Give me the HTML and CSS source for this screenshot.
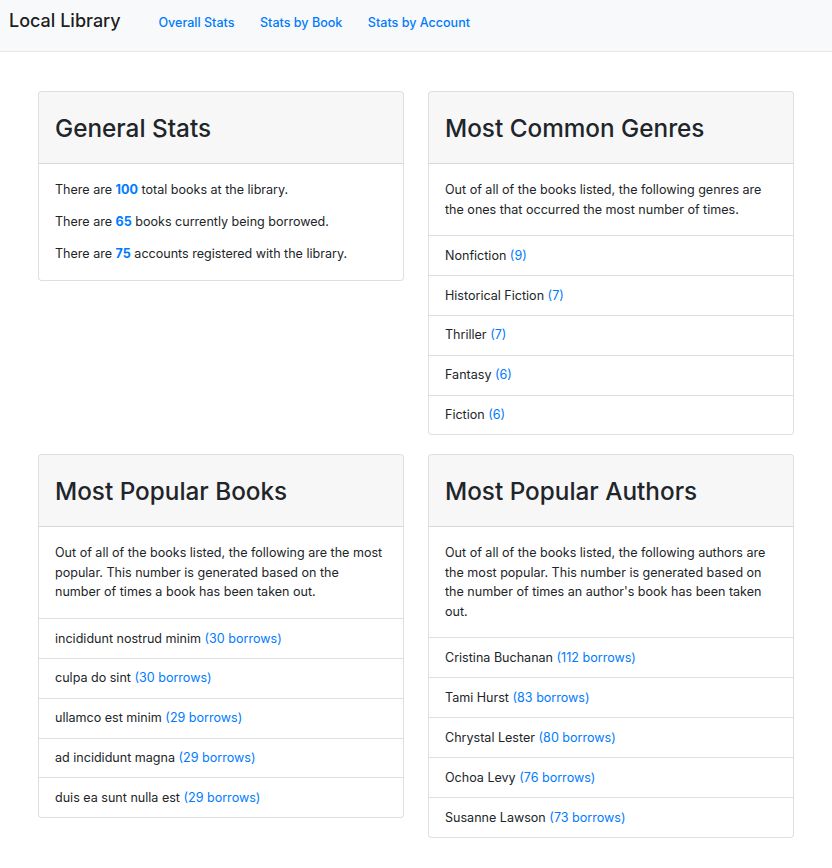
FILE: index.html
```html
<!DOCTYPE html>
<html lang="en">
<head>
<meta charset="utf-8">
<title>Local Library</title>
<link rel="stylesheet" href="styles.css">
</head>
<body>
<nav class="navbar">
  <a class="brand" href="#">Local Library</a>
  <ul class="nav">
    <li><a class="nav-link" href="#">Overall Stats</a></li>
    <li><a class="nav-link" href="#">Stats by Book</a></li>
    <li><a class="nav-link" href="#">Stats by Account</a></li>
  </ul>
</nav>
<main class="container">
  <section class="card">
    <div class="card-header"><h2>General Stats</h2></div>
    <div class="card-body">
      <p>There are <span class="num">100</span> total books at the library.</p>
      <p>There are <span class="num">65</span> books currently being borrowed.</p>
      <p>There are <span class="num">75</span> accounts registered with the library.</p>
    </div>
  </section>
  <section class="card">
    <div class="card-header"><h2>Most Common Genres</h2></div>
    <div class="card-body">
      <p>Out of all of the books listed, the following genres are the ones that occurred the most number of times.</p>
    </div>
    <ul class="list">
      <li>Nonfiction <span class="count">(9)</span></li>
      <li>Historical Fiction <span class="count">(7)</span></li>
      <li>Thriller <span class="count">(7)</span></li>
      <li>Fantasy <span class="count">(6)</span></li>
      <li>Fiction <span class="count">(6)</span></li>
    </ul>
  </section>
  <section class="card">
    <div class="card-header"><h2>Most Popular Books</h2></div>
    <div class="card-body">
      <p>Out of all of the books listed, the following are the most popular. This number is generated based on the number of times a book has been taken out.</p>
    </div>
    <ul class="list">
      <li>incididunt nostrud minim <span class="count">(30 borrows)</span></li>
      <li>culpa do sint <span class="count">(30 borrows)</span></li>
      <li>ullamco est minim <span class="count">(29 borrows)</span></li>
      <li>ad incididunt magna <span class="count">(29 borrows)</span></li>
      <li>duis ea sunt nulla est <span class="count">(29 borrows)</span></li>
    </ul>
  </section>
  <section class="card">
    <div class="card-header"><h2>Most Popular Authors</h2></div>
    <div class="card-body">
      <p>Out of all of the books listed, the following authors are the most popular. This number is generated based on the number of times an author's book has been taken out.</p>
    </div>
    <ul class="list">
      <li>Cristina Buchanan <span class="count">(112 borrows)</span></li>
      <li>Tami Hurst <span class="count">(83 borrows)</span></li>
      <li>Chrystal Lester <span class="count">(80 borrows)</span></li>
      <li>Ochoa Levy <span class="count">(76 borrows)</span></li>
      <li>Susanne Lawson <span class="count">(73 borrows)</span></li>
    </ul>
  </section>
</main>
</body>
</html>
```
FILE: styles.css
```css
* { box-sizing: border-box; }

html, body {
  margin: 0;
  padding: 0;
  background: #fff;
  color: #212529;
  font-family: Inter, "Liberation Sans", Arial, sans-serif;
  font-size: 12.55px;
  line-height: 19.5px;
}

a { text-decoration: none; }

.navbar {
  display: flex;
  align-items: baseline;
  height: 52px;
  padding: 6px 8px 0;
  background: #f8f9fa;
  border-bottom: 1px solid #e7e8ea;
}

.brand {
  font-size: 18px;
  line-height: 29px;
  font-weight: 500;
  color: rgba(0, 0, 0, 0.9);
  margin-left: 1px;
  margin-right: 25px;
}

.nav {
  display: flex;
  list-style: none;
  margin: 0;
  padding: 0;
}

.nav-link {
  display: block;
  padding: 0 12.75px;
  color: #007bff;
  font-size: 12.55px;
  font-weight: 450;
}

.container {
  display: grid;
  grid-template-columns: 366px 366px;
  justify-content: center;
  align-items: start;
  column-gap: 24px;
  row-gap: 19px;
  margin-top: 39px;
  padding-bottom: 30px;
}

.card {
  border: 1px solid rgba(0, 0, 0, 0.125);
  border-radius: 4px;
  background: #fff;
  overflow: hidden;
}

.card-header {
  background: rgba(0, 0, 0, 0.03);
  border-bottom: 1px solid rgba(0, 0, 0, 0.125);
  padding: 21px 16px 20px;
}

.card-header h2 {
  margin: 0;
  font-size: 24.3px;
  line-height: 30px;
  font-weight: 500;
  color: #212529;
}

.card-body {
  padding: 16px;
}

.card-body p {
  margin: 0 0 12.5px;
}

.card-body p:last-child {
  margin-bottom: 0;
}

.num {
  color: #007bff;
  font-weight: bold;
}

.list {
  list-style: none;
  margin: 0;
  padding: 0;
}

.list li {
  border-top: 1px solid rgba(0, 0, 0, 0.125);
  padding: 9.7px 16px;
}

.count {
  color: #007bff;
}
```
